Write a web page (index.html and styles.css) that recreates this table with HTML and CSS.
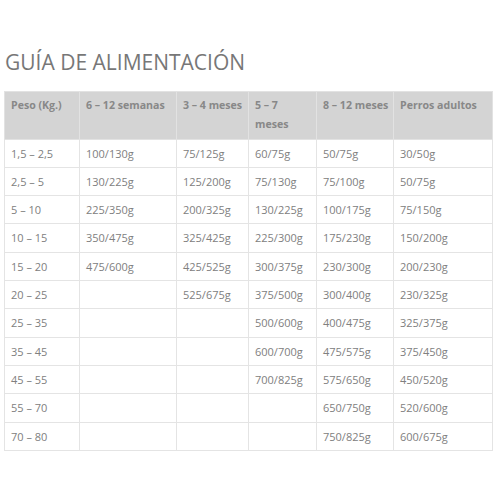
FILE: index.html
```html
<!DOCTYPE html>
<html lang="es">
<head>
<meta charset="utf-8">
<title>Guía de alimentación</title>
<link rel="stylesheet" href="styles.css">
</head>
<body>
<div class="page">
<h2 class="title">GUÍA DE ALIMENTACIÓN</h2>
<table class="guide">
<colgroup>
<col class="c1"><col class="c2"><col class="c3"><col class="c4"><col class="c5"><col class="c6">
</colgroup>
<thead>
<tr><th>Peso (Kg.)</th><th>6 – 12 semanas</th><th>3 – 4 meses</th><th>5 – 7 meses</th><th>8 – 12 meses</th><th>Perros adultos</th></tr>
</thead>
<tbody>
<tr><td>1,5 – 2,5</td><td>100/130g</td><td>75/125g</td><td>60/75g</td><td>50/75g</td><td>30/50g</td></tr>
<tr><td>2,5 – 5</td><td>130/225g</td><td>125/200g</td><td>75/130g</td><td>75/100g</td><td>50/75g</td></tr>
<tr><td>5 – 10</td><td>225/350g</td><td>200/325g</td><td>130/225g</td><td>100/175g</td><td>75/150g</td></tr>
<tr><td>10 – 15</td><td>350/475g</td><td>325/425g</td><td>225/300g</td><td>175/230g</td><td>150/200g</td></tr>
<tr><td>15 – 20</td><td>475/600g</td><td>425/525g</td><td>300/375g</td><td>230/300g</td><td>200/230g</td></tr>
<tr><td>20 – 25</td><td></td><td>525/675g</td><td>375/500g</td><td>300/400g</td><td>230/325g</td></tr>
<tr><td>25 – 35</td><td></td><td></td><td>500/600g</td><td>400/475g</td><td>325/375g</td></tr>
<tr><td>35 – 45</td><td></td><td></td><td>600/700g</td><td>475/575g</td><td>375/450g</td></tr>
<tr><td>45 – 55</td><td></td><td></td><td>700/825g</td><td>575/650g</td><td>450/520g</td></tr>
<tr><td>55 – 70</td><td></td><td></td><td></td><td>650/750g</td><td>520/600g</td></tr>
<tr><td>70 – 80</td><td></td><td></td><td></td><td>750/825g</td><td>600/675g</td></tr>
</tbody>
</table>
</div>
</body>
</html>
```
FILE: styles.css
```css
html, body {
  margin: 0;
  padding: 0;
  background: #ffffff;
}
.page {
  padding: 0 5px 0 4px;
  font-family: "Open Sans", "DejaVu Sans", sans-serif;
  color: #7a7a7a;
}
.title {
  margin: 0;
  padding: 48px 0 0 1px;
  font-size: 21px;
  font-weight: 400;
  line-height: 28px;
  color: #777777;
  letter-spacing: 0;
}
.guide {
  margin-top: 15px;
  width: 488px;
  table-layout: fixed;
  border-collapse: collapse;
  font-size: 11px;
  line-height: 19.3px;
  border: 1px solid #e2e2e2;
}
.c1 { width: 75px; }
.c2 { width: 97px; }
.c3 { width: 72px; }
.c4 { width: 68px; }
.c5 { width: 77px; }
.c6 { width: 99px; }
.guide th {
  background: #d4d4d4;
  color: #888888;
  font-size: 10.6px;
  font-weight: 700;
  text-align: left;
  vertical-align: top;
  padding: 4px 4px 4px 6px;
  border: 1px solid #e2e2e2;
  height: 38px;
}
.guide td {
  color: #808080;
  padding: 4px 3px 4px 6px;
  border: 1px solid #e4e4e4;
  height: 19px;
}
```
